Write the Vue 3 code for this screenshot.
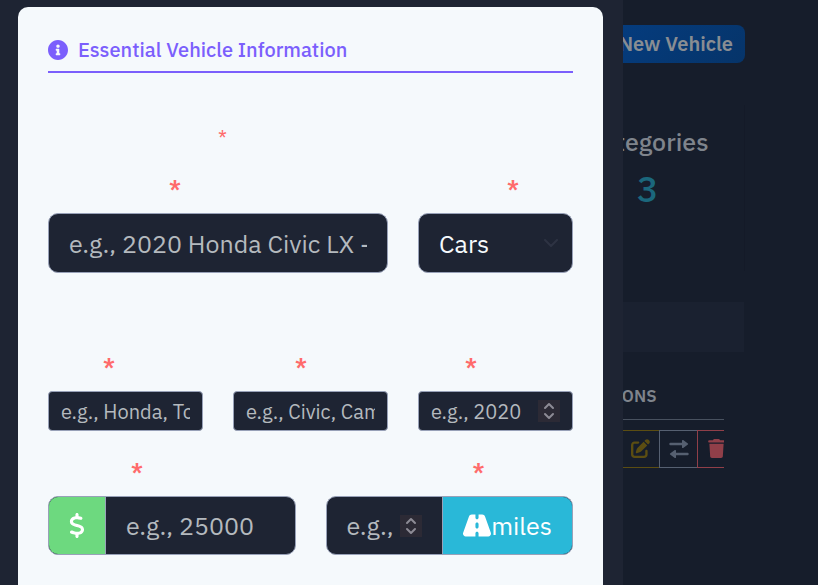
<script setup>
import { ref } from 'vue'

const title = ref('')
const category = ref('Cars')
const make = ref('')
const model = ref('')
const year = ref('')
const price = ref('')
const mileage = ref('')
</script>

<template>
  <div class="app">
    <main class="page">
      <div class="page-actions">
        <button type="button" class="new-vehicle">New Vehicle</button>
      </div>
      <section class="stat">
        <h2>Categories</h2>
        <p>3</p>
      </section>
      <section class="listing">
        <div class="listing-head"></div>
        <div class="table-wrap">
          <table>
            <thead>
              <tr><th scope="col">ACTIONS</th></tr>
            </thead>
            <tbody>
              <tr>
                <td>
                  <div class="row-actions">
                    <button type="button" class="edit" aria-label="Edit">
                      <svg width="19" height="19" viewBox="0 0 512 512"><path d="M471.6 21.7c-21.9-21.9-57.3-21.9-79.2 0L362.3 51.7l97.9 97.9 30.1-30.1c21.9-21.9 21.9-57.3 0-79.2L471.6 21.7zm-299.2 220c-6.1 6.1-10.8 13.6-13.5 21.9l-29.6 88.8c-2.9 8.6-.6 18.1 5.8 24.6s15.9 8.7 24.6 5.8l88.8-29.6c8.2-2.7 15.7-7.4 21.9-13.5L437.7 172.3 339.7 74.3 172.4 241.7zM96 64C43 64 0 107 0 160V416c0 53 43 96 96 96H352c53 0 96-43 96-96V320c0-17.7-14.3-32-32-32s-32 14.3-32 32v96c0 17.7-14.3 32-32 32H96c-17.7 0-32-14.3-32-32V160c0-17.7 14.3-32 32-32h96c17.7 0 32-14.3 32-32s-14.3-32-32-32H96z" /></svg>
                    </button>
                    <button type="button" class="swap" aria-label="Change status">
                      <svg width="20" height="20" viewBox="0 0 20 20"><path d="M1.5 5h12M18.5 15H6.5" fill="none" stroke="currentColor" stroke-width="2.4" stroke-linecap="round" /><path d="M13 1.6v6.8c0 .6.7.9 1.2.5l4.7-3.3c.4-.3.4-.9 0-1.2L14.2 1.1c-.5-.4-1.2-.1-1.2.5zM7 11.6v6.8c0 .6-.7.9-1.2.5l-4.7-3.3c-.4-.3-.4-.9 0-1.2l4.7-3.3c.5-.4 1.2-.1 1.2.5z" /></svg>
                    </button>
                    <button type="button" class="trash" aria-label="Delete">
                      <svg width="17" height="19" viewBox="0 0 448 512"><path d="M135.2 17.7L128 32H32C14.3 32 0 46.3 0 64S14.3 96 32 96H416c17.7 0 32-14.3 32-32s-14.3-32-32-32H320l-7.2-14.3C307.4 6.8 296.3 0 284.2 0H163.8c-12.1 0-23.2 6.8-28.6 17.7zM416 128H32L53.2 467c1.6 25.3 22.6 45 47.9 45H346.9c25.3 0 46.3-19.7 47.9-45L416 128z" /></svg>
                    </button>
                  </div>
                </td>
              </tr>
            </tbody>
          </table>
        </div>
      </section>
    </main>

    <div class="modal" role="dialog" aria-labelledby="section-title">
      <form class="card" @submit.prevent>
        <h1 id="section-title">
          <svg width="20" height="20" viewBox="8 8 496 496"><path d="M256 8C119.043 8 8 119.083 8 256c0 136.997 111.043 248 248 248s248-111.003 248-248C504 119.083 392.957 8 256 8zm0 110c23.196 0 42 18.804 42 42s-18.804 42-42 42-42-18.804-42-42 18.804-42 42-42zm56 254c0 6.627-5.373 12-12 12h-88c-6.627 0-12-5.373-12-12v-24c0-6.627 5.373-12 12-12h12v-64h-12c-6.627 0-12-5.373-12-12v-24c0-6.627 5.373-12 12-12h64c6.627 0 12 5.373 12 12v100h12c6.627 0 12 5.373 12 12v24z" /></svg>
          <span>Essential Vehicle Information</span>
        </h1>
        <p class="note">*</p>

        <div class="row primary">
          <div class="field wide">
            <label for="title" class="mark-title">*</label>
            <input id="title" v-model="title" class="control large" type="text" placeholder="e.g., 2020 Honda Civic LX -" />
          </div>
          <div class="field">
            <label for="category" class="mark-category">*</label>
            <div class="select-wrap">
              <select id="category" v-model="category" class="control large">
                <option>Cars</option>
              </select>
              <svg class="chevron" width="14" height="8" viewBox="0 0 14 8"><path d="M1 1l6 6 6-6" /></svg>
            </div>
          </div>
        </div>

        <div class="row identity">
          <div class="field">
            <label for="make" class="mark-make">*</label>
            <input id="make" v-model="make" class="control" type="text" placeholder="e.g., Honda, Toyota" />
          </div>
          <div class="field">
            <label for="model" class="mark-model">*</label>
            <input id="model" v-model="model" class="control" type="text" placeholder="e.g., Civic, Camry" />
          </div>
          <div class="field">
            <label for="year" class="mark-year">*</label>
            <div class="control number">
              <input id="year" v-model="year" type="number" placeholder="e.g., 2020" />
              <svg class="spin" width="22" height="22" viewBox="0 0 22 22"><path d="M7 8l4-4 4 4M7 14l4 4 4-4" /></svg>
            </div>
          </div>
        </div>

        <div class="row pair">
          <div class="field">
            <label for="price" class="mark-price">*</label>
            <div class="group">
              <span class="addon money">
                <svg width="16" height="25" viewBox="0 0 320 512"><path d="M160 0c17.7 0 32 14.3 32 32V67.7c1.6 .2 3.1 .4 4.7 .7c.4 .1 .7 .1 1.1 .2l48 8.8c17.4 3.2 28.9 19.9 25.7 37.2s-19.9 28.9-37.2 25.7l-47.5-8.7c-31.3-4.6-58.9-1.5-78.3 6.2s-27.2 18.3-29 28.1c-2 10.7-.5 16.7 1.2 20.4c1.8 3.9 5.5 8.3 12.8 13.2c16.3 10.7 41.3 17.7 73.7 26.3l2.9 .8c28.6 7.6 63.6 16.8 89.6 33.8c14.2 9.3 27.6 21.9 35.9 39.5c8.5 17.9 10.3 37.9 6.4 59.2c-6.9 38-33.1 63.4-65.6 76.7c-13.7 5.6-28.6 9.2-44.4 11V480c0 17.7-14.3 32-32 32s-32-14.3-32-32V445.1c-.4-.1-.9-.1-1.3-.2l-.2 0 0 0c-24.4-3.8-64.5-14.3-91.5-26.3c-16.1-7.2-23.4-26.1-16.2-42.2s26.1-23.4 42.2-16.2c20.9 9.3 55.3 18.5 75.2 21.6c31.9 4.7 58.2 2 76-5.3c16.9-6.9 24.6-16.9 26.8-28.9c1.9-10.6 .4-16.7-1.3-20.4c-1.9-4-5.6-8.4-13-13.3c-16.4-10.7-41.5-17.7-74-26.3l-2.8-.7 0 0C119.4 279.3 84.4 270 58.4 253c-14.2-9.3-27.5-22-35.8-39.6c-8.4-17.9-10.1-37.9-6.1-59.2C23.7 116 52.3 91.2 84.8 78.3c13.3-5.3 27.9-8.9 43.2-11V32c0-17.7 14.3-32 32-32z" /></svg>
              </span>
              <input id="price" v-model="price" type="text" inputmode="decimal" placeholder="e.g., 25000" />
            </div>
          </div>
          <div class="field">
            <label for="mileage" class="mark-mileage">*</label>
            <div class="group">
              <div class="number">
                <input id="mileage" v-model="mileage" type="number" placeholder="e.g.," />
                <svg class="spin" width="22" height="22" viewBox="0 0 22 22"><path d="M7 8l4-4 4 4M7 14l4 4 4-4" /></svg>
              </div>
              <span class="addon distance">
                <svg width="28" height="25" viewBox="0 0 576 512"><path d="M256 32H181.2c-27.1 0-51.3 17.1-60.3 42.6L3.1 407.2C1.1 413 0 419.2 0 425.4C0 455.5 24.5 480 54.6 480H256V416c0-17.7 14.3-32 32-32s32 14.3 32 32v64H521.4c30.2 0 54.6-24.5 54.6-54.6c0-6.2-1.1-12.4-3.1-18.2L455.1 74.6C446 49.1 421.9 32 394.8 32H320V96c0 17.7-14.3 32-32 32s-32-14.3-32-32V32zm64 192v64c0 17.7-14.3 32-32 32s-32-14.3-32-32V224c0-17.7 14.3-32 32-32s32 14.3 32 32z" /></svg>
                <span>miles</span>
              </span>
            </div>
          </div>
        </div>
      </form>
    </div>
  </div>
</template>

<style>
body {
  background: #161d2b;
  overflow: hidden;
}
</style>

<style scoped>
* {
  box-sizing: border-box;
}

.app {
  position: relative;
  min-height: 100vh;
  overflow: hidden;
  font-family: "IBM Plex Sans", "Noto Sans", sans-serif;
  background: #161d2b;
}

svg {
  display: block;
  flex: none;
  fill: currentColor;
}

h1,
h2,
p {
  margin: 0;
}

button,
input,
select {
  font: inherit;
}

/* Dimmed page behind the dialog */
.page {
  display: flex;
  flex-direction: column;
  align-items: flex-end;
  padding: 25px 73px 0 0;
}

.new-vehicle {
  width: 194px;
  height: 38px;
  padding: 0 12px;
  border: 0;
  border-radius: 8px;
  background: linear-gradient(135deg, #043f87, #063469);
  color: #898d92;
  font-size: 20px;
  font-weight: 600;
  line-height: 38px;
  text-align: right;
}

.stat {
  width: 194px;
  height: 166px;
  margin-top: 42px;
  padding-top: 20px;
  border-right: 1px solid #141a28;
  text-align: center;
}

.stat h2 {
  color: #7f848c;
  font-size: 25px;
  font-weight: 500;
  line-height: 34px;
}

.stat p {
  margin-top: 8px;
  color: #1b677c;
  font-size: 36px;
  font-weight: 500;
  line-height: 44px;
}

.listing {
  width: 194px;
  margin-top: 31px;
}

.listing-head {
  height: 50px;
  margin-right: 1px;
  background: #1a2130;
}

.table-wrap {
  margin: 23px 21px 0 32px;
  overflow: hidden;
}

table {
  width: 100%;
  border-collapse: collapse;
}

th {
  height: 44px;
  padding: 0 0 2px;
  border-bottom: 1px solid #48515f;
  color: #7f848c;
  font-size: 17px;
  font-weight: 600;
  text-align: left;
}

td {
  padding: 10px 0 0 38px;
}

.row-actions {
  display: flex;
  width: 114px;
}

.row-actions button {
  display: flex;
  align-items: center;
  justify-content: center;
  width: 38px;
  height: 38px;
  padding: 0;
  border: 1px solid currentColor;
  border-right: 0;
  background: transparent;
}

.row-actions .edit {
  color: #5b4d12;
}

.row-actions .swap {
  color: #566071;
}

.row-actions .trash {
  color: #903f49;
}

/* Dialog laid over the page */
.modal {
  position: absolute;
  inset: 0 195px 0 0;
  padding: 7px 20px 0 18px;
  overflow: hidden;
  background: #1e2433;
}

.card {
  min-height: 100%;
  padding: 30px 30px 60px;
  border-radius: 10px;
  background: #f5f9fc;
}

h1 {
  display: flex;
  align-items: center;
  gap: 10px;
  padding-bottom: 8px;
  border-bottom: 2px solid #7b5ffc;
  color: #7b5ffc;
  font-size: 20px;
  font-weight: 500;
  line-height: 26px;
  white-space: nowrap;
}

.note {
  margin-top: 53px;
  padding-left: 170px;
  color: #ff6b6b;
  font-size: 20px;
  line-height: 24px;
}

.row {
  display: grid;
  grid-template-columns: repeat(3, minmax(0, 1fr));
  column-gap: 30px;
}

.primary {
  margin-top: 23px;
}

.identity {
  margin-top: 78px;
}

.pair {
  grid-template-columns: repeat(2, minmax(0, 1fr));
  margin-top: 25px;
}

.wide {
  grid-column: span 2;
}

label {
  display: block;
  margin-bottom: 10px;
  color: #ff6b6b;
  font-size: 20px;
  font-weight: 700;
  line-height: 30px;
}

.mark-title {
  padding-left: 121px;
}

.mark-category {
  padding-left: 89px;
}

.mark-make {
  padding-left: 55px;
}

.mark-model {
  padding-left: 62px;
}

.mark-year {
  padding-left: 47px;
}

.mark-price {
  padding-left: 83px;
}

.mark-mileage {
  padding-left: 147px;
}

.control {
  display: block;
  width: 100%;
  height: 40px;
  padding: 0 12px;
  border: 1px solid #98a1b8;
  border-radius: 4px;
  outline: 0;
  background: #1e2433;
  color: #f5f9fc;
  font-size: 20px;
}

.control.large {
  height: 60px;
  padding: 0 20px;
  border-radius: 10px;
  font-size: 25px;
}

.control.number {
  display: flex;
}

input::placeholder {
  color: #b4b9be;
  opacity: 1;
}

.select-wrap {
  position: relative;
}

select {
  appearance: none;
}

.chevron {
  position: absolute;
  top: 26px;
  right: 15px;
  fill: none;
  stroke: #2d3343;
  stroke-width: 2;
  stroke-linecap: round;
  stroke-linejoin: round;
  pointer-events: none;
}

.number {
  display: flex;
  align-items: center;
}

.number input,
.group input {
  flex: 1;
  min-width: 0;
  height: 100%;
  padding: 0;
  border: 0;
  outline: 0;
  background: transparent;
  color: #f5f9fc;
}

input[type="number"] {
  appearance: textfield;
}

input[type="number"]::-webkit-inner-spin-button,
input[type="number"]::-webkit-outer-spin-button {
  display: none;
  margin: 0;
  appearance: none;
}

.spin {
  background: #2c2a35;
  fill: none;
  stroke: #8d8b95;
  stroke-width: 2;
  stroke-linecap: round;
  stroke-linejoin: round;
}

.group {
  display: flex;
  height: 59px;
  border: 1px solid #98a1b8;
  border-radius: 10px;
  overflow: hidden;
  background: #1e2433;
  font-size: 25px;
}

.group > input {
  padding: 0 20px;
}

.group .number {
  flex: 1;
  min-width: 0;
  padding: 0 20px;
}

.addon {
  display: flex;
  align-items: center;
  color: #fff;
}

.money {
  padding: 0 20px;
  border-right: 1px solid #98a1b8;
  background: #6dd97f;
}

.distance {
  padding: 0 20px;
  border-left: 1px solid #98a1b8;
  background: #29b8d8;
}
</style>
